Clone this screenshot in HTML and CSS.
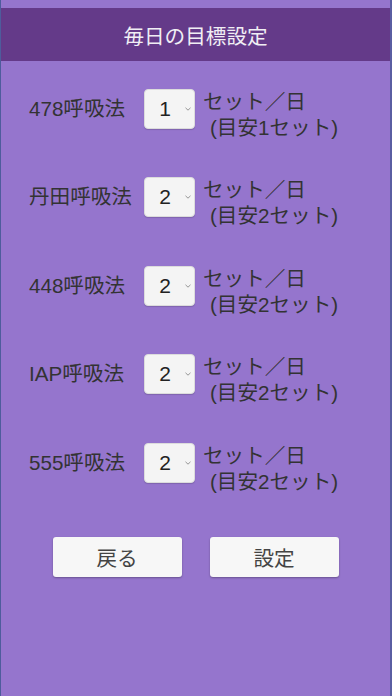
FILE: index.html
```html
<!DOCTYPE html>
<html lang="ja">
<head>
<meta charset="utf-8">
<title>毎日の目標設定</title>
<link rel="stylesheet" href="styles.css">
</head>
<body>
<div class="screen">
  <div class="header">毎日の目標設定</div>
  <div class="rows">
    <div class="row">
      <div class="label">478呼吸法</div>
      <div class="select"><span class="num">1</span><svg class="chev" width="6" height="4" viewBox="0 0 6 4"><path d="M0.5 0.8 L3 3.2 L5.5 0.8" fill="none" stroke="#8a8a8a" stroke-width="0.9"/></svg></div>
      <div class="unit"><span class="l1">セット／日</span><span class="l2">(目安1セット)</span></div>
    </div>
    <div class="row">
      <div class="label">丹田呼吸法</div>
      <div class="select"><span class="num">2</span><svg class="chev" width="6" height="4" viewBox="0 0 6 4"><path d="M0.5 0.8 L3 3.2 L5.5 0.8" fill="none" stroke="#8a8a8a" stroke-width="0.9"/></svg></div>
      <div class="unit"><span class="l1">セット／日</span><span class="l2">(目安2セット)</span></div>
    </div>
    <div class="row">
      <div class="label">448呼吸法</div>
      <div class="select"><span class="num">2</span><svg class="chev" width="6" height="4" viewBox="0 0 6 4"><path d="M0.5 0.8 L3 3.2 L5.5 0.8" fill="none" stroke="#8a8a8a" stroke-width="0.9"/></svg></div>
      <div class="unit"><span class="l1">セット／日</span><span class="l2">(目安2セット)</span></div>
    </div>
    <div class="row">
      <div class="label">IAP呼吸法</div>
      <div class="select"><span class="num">2</span><svg class="chev" width="6" height="4" viewBox="0 0 6 4"><path d="M0.5 0.8 L3 3.2 L5.5 0.8" fill="none" stroke="#8a8a8a" stroke-width="0.9"/></svg></div>
      <div class="unit"><span class="l1">セット／日</span><span class="l2">(目安2セット)</span></div>
    </div>
    <div class="row">
      <div class="label">555呼吸法</div>
      <div class="select"><span class="num">2</span><svg class="chev" width="6" height="4" viewBox="0 0 6 4"><path d="M0.5 0.8 L3 3.2 L5.5 0.8" fill="none" stroke="#8a8a8a" stroke-width="0.9"/></svg></div>
      <div class="unit"><span class="l1">セット／日</span><span class="l2">(目安2セット)</span></div>
    </div>
  </div>
  <div class="buttons">
    <div class="btn">戻る</div>
    <div class="btn">設定</div>
  </div>
</div>
</body>
</html>
```
FILE: styles.css
```css
html, body {
  margin: 0;
  padding: 0;
}
body {
  font-family: "Liberation Sans", "Noto Sans CJK JP", sans-serif;
  background: #9575cd;
}
.screen {
  box-sizing: border-box;
  width: 392px;
  height: 696px;
  background: #9575cd;
  border-left: 1px solid #4e5c9c;
  border-right: 2px solid #5a5ea2;
  padding-top: 8px;
  overflow: hidden;
}
.header {
  height: 53px;
  background: #643a89;
  color: #f0eef4;
  font-size: 20.6px;
  display: flex;
  align-items: center;
  justify-content: center;
}
.rows {
  margin-top: 27.5px;
  display: flex;
  flex-direction: column;
  gap: 36.5px;
}
.row {
  display: flex;
  align-items: flex-start;
  height: 52px;
  color: #333;
  font-size: 20.6px;
}
.label {
  width: 115px;
  padding-left: 28px;
  line-height: 40px;
  height: 40px;
  white-space: nowrap;
}
.select {
  box-sizing: border-box;
  width: 51px;
  height: 40px;
  background: #f4f4f4;
  border: 1px solid #dcdcdc;
  border-radius: 4px;
  box-shadow: 0 1px 1px rgba(0, 0, 0, 0.15);
  display: flex;
  align-items: center;
}
.num {
  width: 40px;
  text-align: center;
  font-size: 21px;
  color: #222;
}
.chev {
  display: block;
  margin-left: 0;
}
.unit {
  margin-left: 8px;
  display: flex;
  flex-direction: column;
  line-height: 26px;
  white-space: nowrap;
}
.l2 {
  padding-left: 7px;
}
.buttons {
  margin-top: 42px;
  display: flex;
  justify-content: center;
  gap: 28px;
}
.btn {
  width: 129px;
  height: 40px;
  background: #f7f7f7;
  border-radius: 3px;
  box-shadow: 0 1px 2px rgba(0, 0, 0, 0.3);
  color: #444;
  font-size: 20.6px;
  display: flex;
  align-items: center;
  justify-content: center;
}
```
